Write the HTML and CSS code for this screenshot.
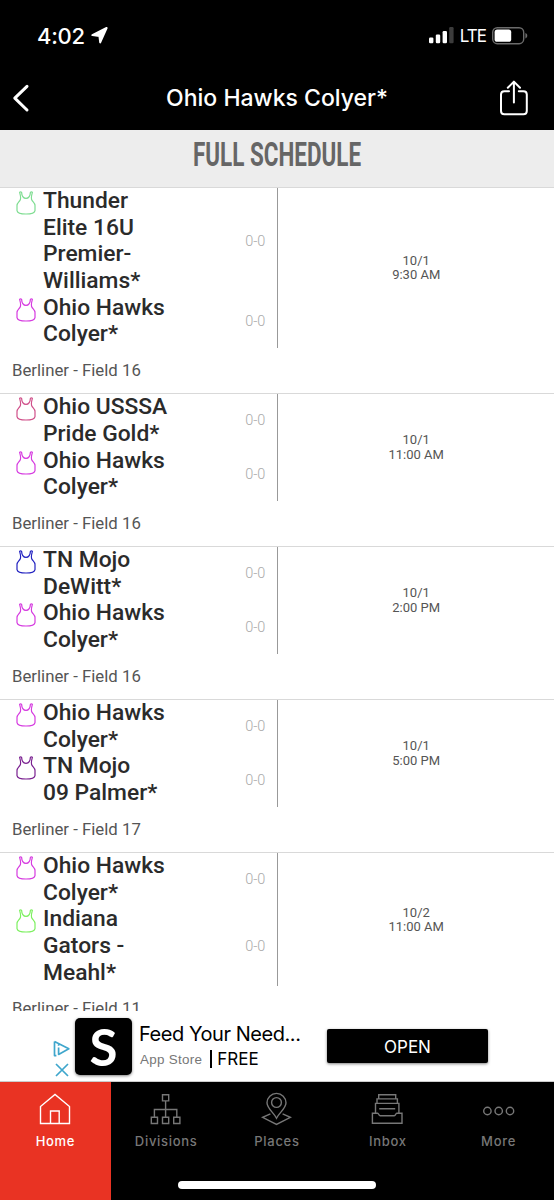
FILE: index.html
```html
<!DOCTYPE html>
<html lang="en">
  <head>
    <meta charset="UTF-8" />
    <meta name="viewport" content="width=device-width, initial-scale=1.0" />
    <title>Ohio Hawks Colyer*</title>
    <link rel="stylesheet" href="styles.css">
  </head>
  <body>
    <svg class="defs" width="0" height="0">
      <symbol id="jersey" viewBox="0 0 20 24">
        <path d="M3.6 1.2 Q4.8 .5 5.6 1.4 C5.8 5 7.6 7.4 10 7.4 C12.4 7.4 14.2 5 14.4 1.4 Q15.2 .5 16.4 1.2 C15.6 4 14.6 7.4 16 9.4 C17.2 11.2 19 11.8 19 14.6 V19.6 C18.6 22.2 16 23 10 23 C4 23 1.4 22.2 1 19.6 V14.6 C1 11.8 2.8 11.2 4 9.4 C5.4 7.4 4.4 4 3.6 1.2 Z" />
      </symbol>
    </svg>

    <div class="app">
      <header class="top">
        <div class="status-bar">
          <div class="clock">
            <span class="time">4:02</span>
            <svg class="arrow" width="17" height="17" viewBox="0 0 17 17"><path d="M15.6 1 L9.2 15.4 L8.4 8.9 L1.4 8.1 Z" /></svg>
          </div>
          <div class="signal">
            <svg width="25" height="17" viewBox="0 0 25 17">
              <rect x="0" y="10.6" width="4.4" height="5.6" rx="1.2" />
              <rect x="6.8" y="7.6" width="4.4" height="8.6" rx="1.2" />
              <rect x="13.6" y="4" width="4.4" height="12.2" rx="1.2" />
              <rect class="dim" x="20.2" y="0" width="4.4" height="16.2" rx="1.2" />
            </svg>
            <span class="network">LTE</span>
            <svg width="36" height="18" viewBox="0 0 36 18">
              <rect class="shell" x=".7" y=".7" width="31" height="16" rx="4.6" />
              <rect x="2.6" y="2.6" width="16.6" height="12.2" rx="2.6" />
              <path class="cap" d="M33.4 6 C35.9 6.8 35.9 10.6 33.4 11.4 Z" />
            </svg>
          </div>
        </div>
        <nav class="nav-bar">
          <svg class="back" width="28" height="30" viewBox="0 0 28 30"><path d="M15 3.4 L2.8 15.2 L15 27" /></svg>
          <h1>Ohio Hawks Colyer*</h1>
          <svg class="share" width="28" height="36" viewBox="0 0 28 36">
            <path d="M9 11.2 H4.4 Q1 11.2 1 14.6 V31 Q1 34.2 4.4 34.2 H23.4 Q26.8 34.2 26.8 31 V14.6 Q26.8 11.2 23.4 11.2 H18.8 M13.9 22.4 V2 M7.8 7.8 L13.9 1.6 L20 7.8" />
          </svg>
        </nav>
      </header>

      <div class="heading"><h2>FULL SCHEDULE</h2></div>

      <main class="schedule">
        <section class="game">
          <div class="matchup">
            <div class="teams">
              <div class="team">
                <svg class="jersey mint"><use href="#jersey" /></svg>
                <div class="name">Thunder<br>Elite 16U<br>Premier-<br>Williams*</div>
                <div class="score">0-0</div>
              </div>
              <div class="team">
                <svg class="jersey magenta"><use href="#jersey" /></svg>
                <div class="name">Ohio Hawks<br>Colyer*</div>
                <div class="score">0-0</div>
              </div>
            </div>
            <div class="when">10/1<br>9:30 AM</div>
          </div>
          <div class="location">Berliner - Field 16</div>
        </section>

        <section class="game">
          <div class="matchup">
            <div class="teams">
              <div class="team">
                <svg class="jersey rose"><use href="#jersey" /></svg>
                <div class="name">Ohio USSSA<br>Pride Gold*</div>
                <div class="score">0-0</div>
              </div>
              <div class="team">
                <svg class="jersey magenta"><use href="#jersey" /></svg>
                <div class="name">Ohio Hawks<br>Colyer*</div>
                <div class="score">0-0</div>
              </div>
            </div>
            <div class="when">10/1<br>11:00 AM</div>
          </div>
          <div class="location">Berliner - Field 16</div>
        </section>

        <section class="game">
          <div class="matchup">
            <div class="teams">
              <div class="team">
                <svg class="jersey navy"><use href="#jersey" /></svg>
                <div class="name">TN Mojo<br>DeWitt*</div>
                <div class="score">0-0</div>
              </div>
              <div class="team">
                <svg class="jersey magenta"><use href="#jersey" /></svg>
                <div class="name">Ohio Hawks<br>Colyer*</div>
                <div class="score">0-0</div>
              </div>
            </div>
            <div class="when">10/1<br>2:00 PM</div>
          </div>
          <div class="location">Berliner - Field 16</div>
        </section>

        <section class="game">
          <div class="matchup">
            <div class="teams">
              <div class="team">
                <svg class="jersey magenta"><use href="#jersey" /></svg>
                <div class="name">Ohio Hawks<br>Colyer*</div>
                <div class="score">0-0</div>
              </div>
              <div class="team">
                <svg class="jersey purple"><use href="#jersey" /></svg>
                <div class="name">TN Mojo<br>09 Palmer*</div>
                <div class="score">0-0</div>
              </div>
            </div>
            <div class="when">10/1<br>5:00 PM</div>
          </div>
          <div class="location">Berliner - Field 17</div>
        </section>

        <section class="game">
          <div class="matchup">
            <div class="teams">
              <div class="team">
                <svg class="jersey magenta"><use href="#jersey" /></svg>
                <div class="name">Ohio Hawks<br>Colyer*</div>
                <div class="score">0-0</div>
              </div>
              <div class="team">
                <svg class="jersey lime"><use href="#jersey" /></svg>
                <div class="name">Indiana<br>Gators -<br>Meahl*</div>
                <div class="score">0-0</div>
              </div>
            </div>
            <div class="when">10/2<br>11:00 AM</div>
          </div>
          <div class="location">Berliner - Field 11</div>
        </section>
      </main>

      <aside class="ad">
        <svg class="ad-choices" width="18" height="38" viewBox="0 0 18 38">
          <path d="M1.5 1.6 L15.8 8.8 L5.6 14.4 V7.6 M1.5 1.6 V15.6 H3.4 M5.6 4.4 V5.8" />
          <path d="M3 24 L15 36 M15 24 L3 36" />
        </svg>
        <div class="ad-logo">S</div>
        <div class="ad-text">
          <div class="ad-title">Feed Your Need...</div>
          <div class="ad-meta"><span class="store">App Store</span><span class="price">FREE</span></div>
        </div>
        <div class="ad-button">OPEN</div>
      </aside>

      <footer class="tabs">
        <div class="tab active">
          <svg width="36" height="36" viewBox="0 0 36 36"><path d="M3.5 32.5 V15.5 L18 3.5 L32.5 15.5 V32.5 Z M13.5 32.5 V20 H22.2 V32.5" /></svg>
          <span>Home</span>
        </div>
        <div class="tab">
          <svg width="36" height="36" viewBox="0 0 36 36"><path d="M14.5 3.7 H20.7 V9.9 H14.5 Z M3.3 26.3 H9.5 V32.5 H3.3 Z M14.5 26.3 H20.7 V32.5 H14.5 Z M25.7 26.3 H31.9 V32.5 H25.7 Z M17.6 9.9 V26.3 M6.4 26.3 V18.5 H28.8 V26.3" /></svg>
          <span>Divisions</span>
        </div>
        <div class="tab">
          <svg width="36" height="36" viewBox="0 0 36 36">
            <path d="M17.5 27.2 C15 21.8 8 17.5 8 11.8 A9.5 9.4 0 0 1 27 11.8 C27 17.5 20 21.8 17.5 27.2 Z M11.4 22.8 L3.6 26.4 L17.5 33.4 L31.4 26.4 L23.6 22.8" />
            <circle cx="17.5" cy="11.5" r="4.9" />
          </svg>
          <span>Places</span>
        </div>
        <div class="tab">
          <svg width="36" height="36" viewBox="0 0 36 36"><path d="M8.7 7.7 V3.8 H25.7 V7.7 M7 12.2 V7.9 H27.4 V12.2 M5.5 22.2 V12.4 H28.9 V22.2 M9.2 17.8 H25.2 M2.4 22.2 H7.7 C8.7 22.2 8.7 24.8 10.2 24.8 H24.2 C25.7 24.8 25.7 22.2 26.7 22.2 H32 V32.2 H2.4 Z" /></svg>
          <span>Inbox</span>
        </div>
        <div class="tab">
          <svg width="36" height="36" viewBox="0 0 36 36">
            <circle cx="6.4" cy="20" r="3.7" /><circle cx="17.7" cy="20" r="3.7" /><circle cx="29" cy="20" r="3.7" />
          </svg>
          <span>More</span>
        </div>
        <div class="home-indicator"></div>
      </footer>
    </div>
  </body>
</html>
```
FILE: styles.css
```css
* {
  box-sizing: border-box;
}

body {
  margin: 0;
  background: #fff;
  font-family: Roboto, sans-serif;
}

h1, h2 {
  margin: 0;
}

.defs {
  display: block;
}

.app {
  width: 554px;
  height: 1200px;
  display: flex;
  flex-direction: column;
  overflow: hidden;
}

/* Header */
.top {
  height: 130px;
  flex: none;
  background: #000;
  color: #fff;
  font-family: Inter, sans-serif;
}

.status-bar {
  height: 66px;
  padding: 5px 26px 0 37px;
  display: flex;
  align-items: center;
  justify-content: space-between;
}

.clock, .signal {
  display: flex;
  align-items: center;
}

.clock {
  gap: 6px;
}

.time {
  font-size: 22px;
  font-weight: 500;
  letter-spacing: -0.3px;
}

.arrow path {
  fill: #fff;
  stroke: #fff;
  stroke-width: 2;
  stroke-linejoin: round;
}

.signal {
  gap: 6px;
}

.signal svg {
  fill: #fff;
}

.signal .dim {
  fill: #3c3c3c;
}

.signal .shell {
  fill: none;
  stroke: #6b6b6b;
  stroke-width: 1.4;
}

.signal .cap {
  fill: #6b6b6b;
}

.network {
  font-size: 17px;
  letter-spacing: -1px;
}

.nav-bar {
  height: 64px;
  padding: 0 26px 0 12px;
  display: flex;
  align-items: center;
}

.nav-bar svg {
  fill: none;
  stroke: #fff;
  stroke-linecap: round;
  stroke-linejoin: round;
}

.back {
  stroke-width: 3;
}

.share {
  stroke-width: 2;
}

.nav-bar h1 {
  flex: 1;
  padding-left: 14px;
  font-size: 23px;
  font-weight: 500;
  text-align: center;
  padding-right: 14px;
  margin: 0 -14px 0 0;
}

.heading {
  height: 58px;
  flex: none;
  padding-top: 4px;
  background: #ededed;
  border-bottom: 1px solid #d9d9d9;
  text-align: center;
}

.heading h2 {
  color: #666;
  font-size: 34px;
  line-height: 40px;
  font-weight: 700;
  transform: scaleX(0.66);
}

/* Schedule */
.schedule {
  height: 823px;
  flex: none;
  overflow: hidden;
}

.game {
  border-bottom: 1px solid #d9d9d9;
}

.matchup {
  display: flex;
}

.teams {
  width: 278.4px;
  border-right: 1.5px solid #999;
}

.team {
  display: flex;
  align-items: center;
  padding: 0 12px 0 16px;
}

.jersey {
  width: 20px;
  height: 24px;
  margin-top: 3px;
  align-self: flex-start;
  fill: none;
  stroke: currentColor;
  stroke-width: 1.2;
  stroke-linejoin: round;
}

.mint { color: #7fdd92; }
.magenta { color: #d63be0; }
.rose { color: #d0508a; }
.navy { color: #2222c0; }
.purple { color: #7a2090; }
.lime { color: #7df060; }

.name {
  flex: 1;
  margin-left: 7px;
  color: #2b2b2b;
  font-size: 22.8px;
  font-weight: 500;
  line-height: 26.65px;
}

.score {
  color: #aaa;
  font-size: 14.5px;
  font-weight: 300;
}

.when {
  flex: 1;
  align-self: center;
  padding-top: 1px;
  color: #555;
  font-size: 13px;
  line-height: 14.6px;
  text-align: center;
}

.location {
  height: 45.3px;
  padding: 0 12px;
  color: #555;
  font-size: 16.8px;
  line-height: 45px;
}

/* Ad banner */
.ad {
  height: 71px;
  flex: none;
  padding: 7px 66px 0 53px;
  display: flex;
  font-family: Inter, sans-serif;
  color: #000;
  border-bottom: 1px solid #ccc;
}

.ad-choices {
  margin-top: 22px;
  fill: none;
  stroke: #3fa6cc;
  stroke-width: 1.7;
  stroke-linejoin: round;
}

.ad-logo {
  width: 57px;
  height: 57px;
  margin-left: 4px;
  border-radius: 5px;
  background: #000;
  box-shadow: 0 1px 3px rgba(0, 0, 0, 0.5);
  color: #fff;
  font-family: Lato, sans-serif;
  font-size: 51px;
  font-weight: 700;
  line-height: 57px;
  text-align: center;
}

.ad-text {
  flex: 1;
  padding: 4px 0 0 7px;
  white-space: nowrap;
}

.ad-title {
  font-size: 20px;
  line-height: 24px;
  letter-spacing: -0.45px;
}

.ad-meta {
  display: flex;
  align-items: center;
  margin-top: 4px;
}

.store {
  margin: 0 8px 0 1px;
  color: #777;
  font-family: "Liberation Sans", sans-serif;
  font-size: 13.4px;
  letter-spacing: 0.3px;
}

.price {
  padding-left: 5px;
  border-left: 2px solid #000;
  font-size: 17px;
  line-height: 18px;
}

.ad-button {
  width: 161px;
  height: 34px;
  margin-top: 11px;
  border-radius: 2px;
  background: #000;
  box-shadow: 0 1px 3px rgba(0, 0, 0, 0.5);
  color: #fff;
  font-size: 17px;
  line-height: 36px;
  text-align: center;
}

/* Tab bar */
.tabs {
  position: relative;
  flex: 1;
  display: flex;
  background: #000;
}

.tab {
  flex: 1;
  padding-top: 8.5px;
  display: flex;
  flex-direction: column;
  align-items: center;
  color: #777;
  font-family: Inter, sans-serif;
  font-size: 13px;
  font-weight: 500;
  letter-spacing: 0.7px;
}

.tab svg {
  fill: none;
  stroke: currentColor;
  stroke-width: 1.4;
}

.tab span {
  margin-top: 5.5px;
  line-height: 18px;
}

.tab.active {
  background: #e93323;
  color: #fff;
}

.home-indicator {
  position: absolute;
  left: 178px;
  bottom: 11px;
  width: 198px;
  height: 8px;
  border-radius: 4px;
  background: #fff;
}
```
